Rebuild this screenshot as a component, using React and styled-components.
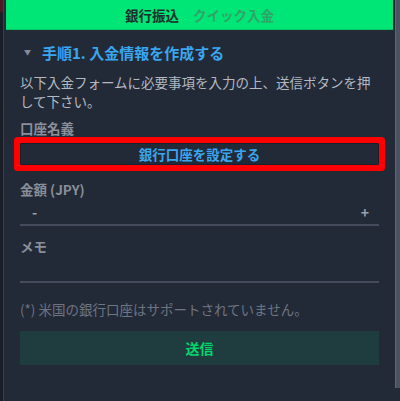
import React, { useState } from 'react'
import styled, { createGlobalStyle } from 'styled-components'

const GlobalStyle = createGlobalStyle`
  html, body {
    margin: 0;
    padding: 0;
    background: #1b202c;
  }
  body {
    font-family: "Noto Sans CJK JP", "Noto Sans", "Liberation Sans", sans-serif;
  }
`

const App = () => {
  const [tab, setTab] = useState('bank')

  return (
    <Page>
      <GlobalStyle />
      <Edge>
        <EdgeMark />
      </Edge>
      <Panel>
        <Tabs>
          <Tab active={tab === 'bank'} onClick={() => setTab('bank')}>銀行振込</Tab>
          <Tab active={tab === 'quick'} onClick={() => setTab('quick')}>クイック入金</Tab>
        </Tabs>
        <Body>
          <StepTitle>
            <Caret>▼</Caret>
            <span>手順1. 入金情報を作成する</span>
          </StepTitle>
          <Intro>以下入金フォームに必要事項を入力の上、送信ボタンを押して下さい。</Intro>

          <Label>口座名義</Label>
          <BankButton>銀行口座を設定する</BankButton>

          <Label top={15}>金額 (JPY)</Label>
          <AmountRow>
            <Step>-</Step>
            <Step>+</Step>
          </AmountRow>

          <Label top={11}>メモ</Label>
          <MemoLine />

          <Note>(*) 米国の銀行口座はサポートされていません。</Note>
          <Submit>送信</Submit>
        </Body>
      </Panel>
      <ScrollTrack>
        <Thumb />
      </ScrollTrack>
    </Page>
  )
}

export default App

const Page = styled.div`
  display: flex;
  width: 400px;
  height: 401px;
  overflow: hidden;
  background: #1b202c;
`

const Edge = styled.div`
  width: 3px;
  background: #1a1e29;
`

const EdgeMark = styled.div`
  height: 12px;
  background: #4a1b26;
`

const Panel = styled.div`
  flex: 1;
  border-left: 1px solid #3a4051;
  padding: 0 2px 0 2px;
  background: #222a38;
`

const Tabs = styled.div`
  display: flex;
  justify-content: center;
  align-items: center;
  gap: 14px;
  height: 29px;
  background: #00e676;
  border-bottom: 1px solid #00c868;
`

const Tab = styled.span`
  font-size: 13.5px;
  font-weight: 700;
  color: ${(p) => (p.active ? '#1d2f2c' : '#2fa468')};
  cursor: pointer;
`

const Body = styled.div`
  padding: 11px 14px 0 14px;
`

const StepTitle = styled.div`
  display: flex;
  align-items: center;
  height: 20px;
  margin-top: 1px;
  font-size: 15px;
  font-weight: 700;
  color: #3aa6ef;
`

const Caret = styled.span`
  font-size: 7px;
  color: #858b96;
  margin: 0 11px 0 4px;
`

const Intro = styled.p`
  margin: 11px 0 0;
  font-size: 13.5px;
  line-height: 19px;
  color: #b4b8c0;
`

const Label = styled.div`
  margin-top: ${(p) => p.top ?? 8}px;
  font-size: 13.5px;
  line-height: 19px;
  font-weight: 700;
  color: #8a8f99;
`

const BankButton = styled.button`
  display: block;
  width: 100%;
  height: 22px;
  margin-top: 5px;
  padding: 0;
  border: 1px solid #1a202b;
  border-radius: 1px;
  background: #222a38;
  box-shadow: 0 0 0 6px #ff0000;
  font-family: inherit;
  font-size: 13.5px;
  font-weight: 700;
  color: #3aa6ef;
  cursor: pointer;
`

const AmountRow = styled.div`
  display: flex;
  justify-content: space-between;
  align-items: center;
  height: 25px;
  padding: 0 10px 0 12px;
  border-bottom: 2px solid #454b5c;
`

const Step = styled.span`
  font-size: 14px;
  font-weight: 700;
  color: #9ca1aa;
  cursor: pointer;
`

const MemoLine = styled.div`
  height: 25px;
  border-bottom: 2px solid #454b5c;
`

const Note = styled.div`
  margin-top: 17px;
  font-size: 13.5px;
  line-height: 19px;
  color: #6e7480;
`

const Submit = styled.button`
  display: block;
  width: 100%;
  height: 34px;
  margin-top: 12px;
  border: none;
  background: #1f3c3e;
  font-family: inherit;
  font-size: 14px;
  font-weight: 700;
  color: #00d86e;
  cursor: pointer;
`

const ScrollTrack = styled.div`
  width: 5px;
  background: #222a38;
`

const Thumb = styled.div`
  height: 388px;
  background: #4d5262;
  border-left: 1px solid #60657a;
`
